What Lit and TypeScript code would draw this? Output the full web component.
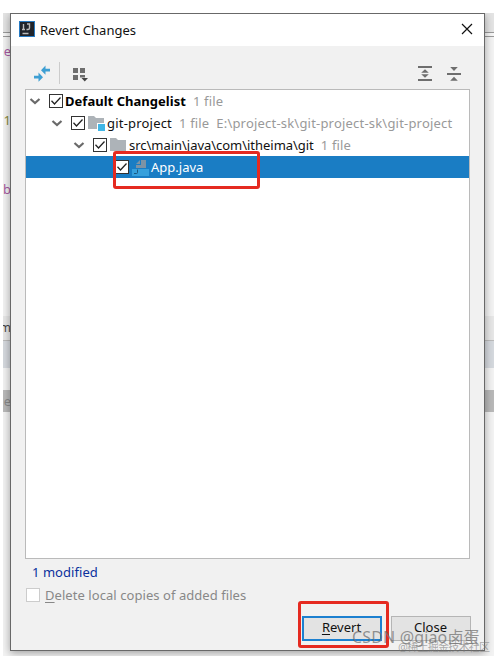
import { LitElement, html, svg, css, nothing } from "lit";
import { customElement, property } from "lit/decorators.js";

type Kind = "none" | "module" | "folder" | "java";
interface Row {
  level: number;
  kind: Kind;
  label: string;
  track: number;
  note?: string;
  path?: string;
  selected?: boolean;
}

const rows: Row[] = [
  { level: 0, kind: "none", label: "Default Changelist", track: 0.03, note: "1 file" },
  { level: 1, kind: "module", label: "git-project", track: 0.2, note: "1 file", path: "E:\\project-sk\\git-project-sk\\git-project" },
  { level: 2, kind: "folder", label: "src\\main\\java\\com\\itheima\\git", track: -0.03, note: "1 file" },
  { level: 3, kind: "java", label: "App.java", track: 0, selected: true },
];

const folder = svg`<path fill="#adb3b8" d="M0 1h6l2 2h8v11H0z"/>`;

@customElement("tree-row")
class TreeRow extends LitElement {
  @property({ attribute: false }) row!: Row;

  static styles = css`
    :host { display: block; }
    .row { display: flex; align-items: center; height: 22px; white-space: pre; color: #111; }
    .selected { background: #1a7dc4; color: #fff; }
    .chevron { width: 12px; height: 12px; flex: none; margin-left: 3px; }
    .hidden { visibility: hidden; }
    .check { width: 14px; height: 14px; flex: none; margin-left: 8px; }
    .icon { width: 17px; height: 17px; flex: none; margin-left: 3px; }
    .label { margin-left: 2px; }
    .bold { font-weight: 700; color: #000; }
    .note { color: #999; margin-left: 7px; letter-spacing: .15px; }
    .path { color: #999; margin-left: 7px; letter-spacing: .2px; }
  `;

  private icon(kind: Kind) {
    if (kind === "none") return nothing;
    const art =
      kind === "java"
        ? svg`<path fill="#7d93a5" d="M9 1h5v8H4V6h5z"/><path fill="#7d93a5" d="M8 1v4H4z"/>
              <path fill="#37a0dc" d="M0 10h17v7H0z"/><path fill="none" stroke="#1d577e" d="M5.500 10.500v3q0 1-1 1H2"/>`
        : kind === "module"
          ? svg`${folder}<path fill="#fff" d="M9 8h8v8H9z"/><path fill="#40b6e6" d="M10 9h7v7h-7z"/>`
          : folder;
    return html`<svg class="icon" viewBox="0 0 17 17">${art}</svg>`;
  }

  render() {
    const r = this.row;
    return html`<div class="row ${r.selected ? "selected" : ""}" style="padding-left:${r.level * 22}px">
      <svg class="chevron ${r.selected ? "hidden" : ""}" viewBox="0 0 12 12">
        <path d="M1.500 4l4.500 4L10.500 4" fill="none" stroke="#6a6a6a" stroke-width="2.200" />
      </svg>
      <svg class="check" viewBox="0 0 14 14">
        <rect x=".5" y=".5" width="13" height="13" fill="#fff" stroke="#333" />
        <path d="M2.500 6.800l3 3.200L11.500 3.500" fill="none" stroke="#222" stroke-width="1.300" />
      </svg>${this.icon(r.kind)}<span class="label ${r.level === 0 ? "bold" : ""}" style="letter-spacing:${r.track}px">${r.label}</span>${
        r.note ? html`<span class="note">${r.note}</span>` : nothing
      }${r.path ? html`<span class="path">${r.path}</span>` : nothing}
    </div>`;
  }
}

@customElement("app-root")
class AppRoot extends LitElement {
  static styles = css`
    * { box-sizing: border-box; }
    :host {
      display: block; position: relative; width: 494px; height: 656px; overflow: hidden;
      background: #fff; padding: 13px 2px 0 3px;
      font: 13px/18px "Noto Sans", "Noto Sans CJK SC", sans-serif;
    }
    .editor { height: 643px; background: #f3f3f3; padding-left: 7px; position: relative; overflow: hidden; }
    .strips { position: absolute; inset: 0; display: flex; flex-direction: column; }
    .s-top { height: 20px; background: #e4e4e4; border-bottom: 1px solid #999; }
    .s-gap { height: 4px; background: #f6f6f6; border-bottom: 1px solid #999; }
    .s-code { height: 279px; }
    .s-head { height: 25px; background: #e7e7e7; border-bottom: 1px solid #bbb; }
    .s-tabs { height: 27px; background: #d5d9de; }
    .s-line { height: 22px; }
    .s-sel { height: 22px; background: #b9b9b9; }
    .bit { position: absolute; width: 8px; overflow: hidden; display: flex; justify-content: flex-end; white-space: nowrap; left: 0; }
    .purple { color: #a65aa0; }
    .olive { color: #8a8a3a; }
    .dark { color: #444; font-size: 12px; }
    .dim { color: #888; }
    .dialog {
      position: relative; width: 475px; height: 638px; background: #f1f1f1;
      border: 1px solid #686868; box-shadow: 0 2px 8px rgba(0, 0, 0, .35);
      display: flex; flex-direction: column;
    }
    .title { height: 32px; background: #fff; display: flex; align-items: center; padding: 0 11px 2px 8px; color: #111; }
    .logo { width: 16px; height: 16px; margin-right: 5px; }
    .name { flex: 1; padding-top: 1px; letter-spacing: .03px; }
    .x { width: 12px; height: 12px; }
    .tools { height: 43px; display: flex; align-items: center; padding: 13px 9px 0 22px; }
    .swap { width: 18px; height: 18px; }
    .bar { width: 1px; height: 22px; background: #ccc; margin: 0 12px 2px 8px; }
    .grid { width: 18px; height: 18px; }
    .fill { flex: 1; }
    .fold { width: 16px; height: 18px; margin-right: 13px; }
    .tree { margin: 0 14px; height: 470px; background: #fff; border: 1px solid #bababa; }
    .status { color: #0a309d; padding-left: 21px; height: 27px; line-height: 26px; letter-spacing: .05px; }
    .option { display: flex; align-items: center; height: 18px; padding-left: 15px; color: #888; letter-spacing: .06px; }
    .box { width: 14px; height: 14px; border: 1px solid #ccc; background: #fff; margin-right: 5px; }
    .buttons { display: flex; justify-content: flex-end; gap: 9px; padding: 12px 13px 0 0; }
    .btn {
      width: 80px; height: 25px; background: #e3e3e3; border: 1px solid #b5b5b5; color: #111;
      font: inherit; padding: 0 1px 3px 0; line-height: 20px; text-align: center;
    }
    .primary { border: 2px solid #1c80d0; line-height: 18px; }
    u { text-underline-offset: 2px; }
    .mark { position: absolute; border: 3px solid #e52a20; border-radius: 3px; }
    .mark-file { left: 113px; top: 151px; width: 147px; height: 38px; }
    .mark-revert { left: 298px; top: 601px; width: 91px; height: 47px; }
    .wm { position: absolute; white-space: nowrap; }
    .wm-a { left: 352px; top: 627px; font-size: 16px; line-height: 20px; letter-spacing: .15px; color: rgba(110, 110, 110, .72); }
    .wm-b { left: 398px; top: 639px; font-size: 11px; line-height: 16px; letter-spacing: -.75px; color: rgba(120, 120, 120, .6); }
  `;

  render() {
    return html`
      <div class="editor">
        <div class="strips">
          <div class="s-top"></div><div class="s-gap"></div><div class="s-code"></div>
          <div class="s-head"></div><div class="s-tabs"></div><div class="s-line"></div><div class="s-sel"></div>
        </div>
        <span class="bit purple" style="top:29px">ge</span>
        <span class="bit olive" style="top:98px">1</span>
        <span class="bit purple" style="top:167px">ab</span>
        <span class="bit dark" style="top:306px">m</span>
        <span class="bit dim" style="top:379px">e</span>
        <section class="dialog">
          <header class="title">
            <svg class="logo" viewBox="0 0 16 16">
              <rect x=".5" y=".5" width="15" height="15" fill="#20242b" stroke="#287bc4" />
              <path d="M4.500 3v5.500M3 8.500h3M8 3h2.500v4q0 1.500-1.500 1.500H7.500M3.500 12.500h6" fill="none" stroke="#bbb" stroke-width="1.400" />
            </svg>
            <span class="name">Revert Changes</span>
            <svg class="x" viewBox="0 0 12 12"><path d="M1 1l10 10M11 1L1 11" stroke="#111" stroke-width="1.200" /></svg>
          </header>
          <div class="tools">
            <svg class="swap" viewBox="0 0 18 18">
              <path fill="#3e9fd3" d="M8 5.200L12.500.5v3.300H17v2.700h-4.500v3.300zM10 12.200L5.500 7.500v3.300H1v2.700h4.500v3.300z" />
            </svg>
            <i class="bar"></i>
            <svg class="grid" viewBox="0 0 18 18">
              <path fill="#6e6e6e" d="M1 3h5v5H1zM8 3h5v5H8zM1 10h5v5H1zM8 10h5v2.500H8z" />
              <path fill="#444" d="M9.500 13H16l-3.250 3.500z" />
            </svg>
            <span class="fill"></span>
            <svg class="fold" viewBox="0 0 16 18">
              <path fill="#6e6e6e" d="M1 1h14v2H1zM1 14h14v2H1zM8 4.300l3.800 3.500H4.200zM4.200 9.300h7.600L8 12.800z" />
            </svg>
            <svg class="fold" viewBox="0 0 16 18">
              <path fill="#6e6e6e" d="M1 8h14v2H1zM4.200 2h7.600L8 6zM8 11.800l3.800 4H4.200z" />
            </svg>
          </div>
          <div class="tree">${rows.map((r) => html`<tree-row .row=${r}></tree-row>`)}</div>
          <div class="status">1 modified</div>
          <div class="option"><span class="box"></span><span><u>D</u>elete local copies of added files</span></div>
          <div class="buttons">
            <button class="btn primary"><u>R</u>evert</button>
            <button class="btn">Close</button>
          </div>
        </section>
      </div>
      <div class="mark mark-file"></div>
      <div class="mark mark-revert"></div>
      <span class="wm wm-b">@稀土掘金技术社区</span>
      <span class="wm wm-a">CSDN @giao卤蛋</span>
    `;
  }
}
